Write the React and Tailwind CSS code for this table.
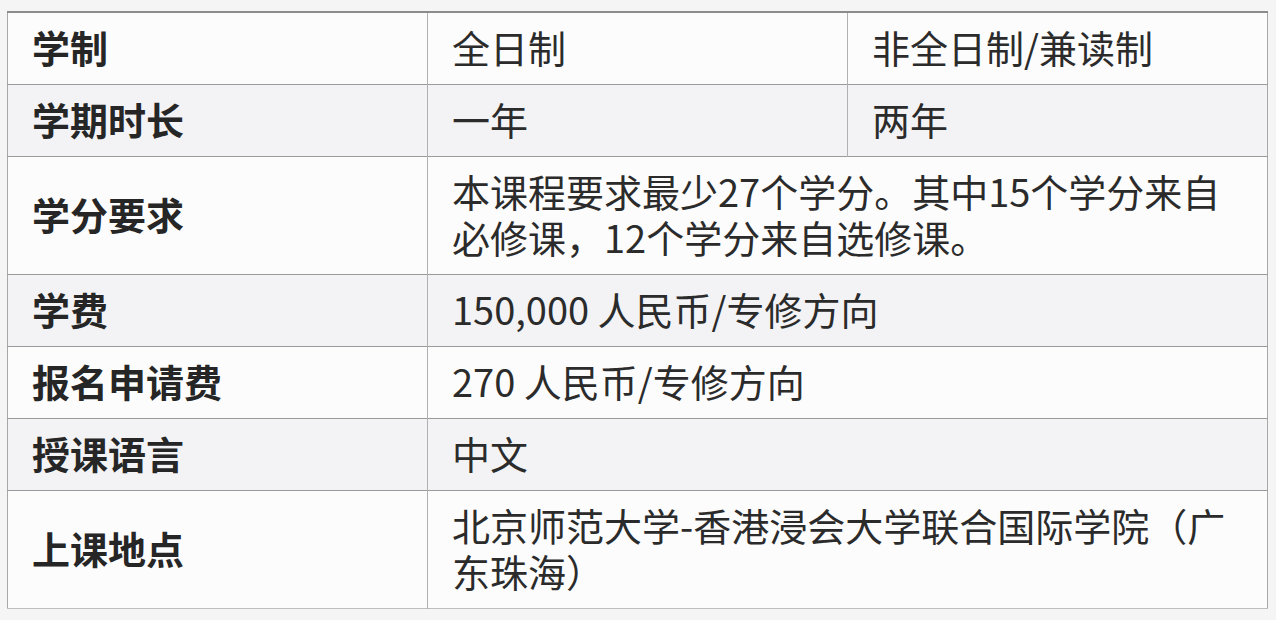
import React from 'react';

const rows = [
  { label: '学制', cells: ['全日制', '非全日制/兼读制'] },
  { label: '学期时长', cells: ['一年', '两年'] },
  {
    label: '学分要求',
    wide: ['本课程要求最少27个学分。其中15个学分来自', '必修课，12个学分来自选修课。'],
  },
  { label: '学费', wide: ['150,000 人民币/专修方向'] },
  { label: '报名申请费', wide: ['270 人民币/专修方向'] },
  { label: '授课语言', wide: ['中文'] },
  {
    label: '上课地点',
    wide: ['北京师范大学-香港浸会大学联合国际学院（广', '东珠海）'],
  },
];

const cellBase = 'pt-[11px] pb-[14px] align-middle text-[38px] leading-[46px]';
const valueCell =
  'border-l border-l-[#b0b0b0] pl-[24px] pr-4 font-normal text-[#2b2b2b] whitespace-nowrap ' + cellBase;

export default function App() {
  return (
    <div
      className="min-h-screen bg-[#f5f5f5] pt-[11px] pl-[7px]"
      style={{ fontFamily: '"Noto Sans CJK SC", "Noto Sans", sans-serif' }}
    >
      <table className="w-[1260px] table-fixed border-collapse border-t-2 border-t-[#8c8c8c] border-x border-x-[#a8a8a8] border-b border-b-[#bdbdbd]">
        <colgroup>
          <col className="w-[420px]" />
          <col className="w-[420px]" />
          <col className="w-[420px]" />
        </colgroup>
        <tbody>
          {rows.map((row, i) => (
            <tr
              key={row.label}
              className={
                (i % 2 === 1 ? 'bg-[#f3f3f5] ' : 'bg-[#fcfcfc] ') +
                (i < rows.length - 1 ? 'border-b border-b-[#9a9a9a]' : '')
              }
            >
              <td className={'pl-[24px] pr-4 font-bold text-[#262626] ' + cellBase}>{row.label}</td>
              {row.cells ? (
                row.cells.map((c) => (
                  <td key={c} className={valueCell}>
                    {c}
                  </td>
                ))
              ) : (
                <td colSpan={2} className={valueCell}>
                  {row.wide.map((line) => (
                    <div key={line}>{line}</div>
                  ))}
                </td>
              )}
            </tr>
          ))}
        </tbody>
      </table>
    </div>
  );
}
